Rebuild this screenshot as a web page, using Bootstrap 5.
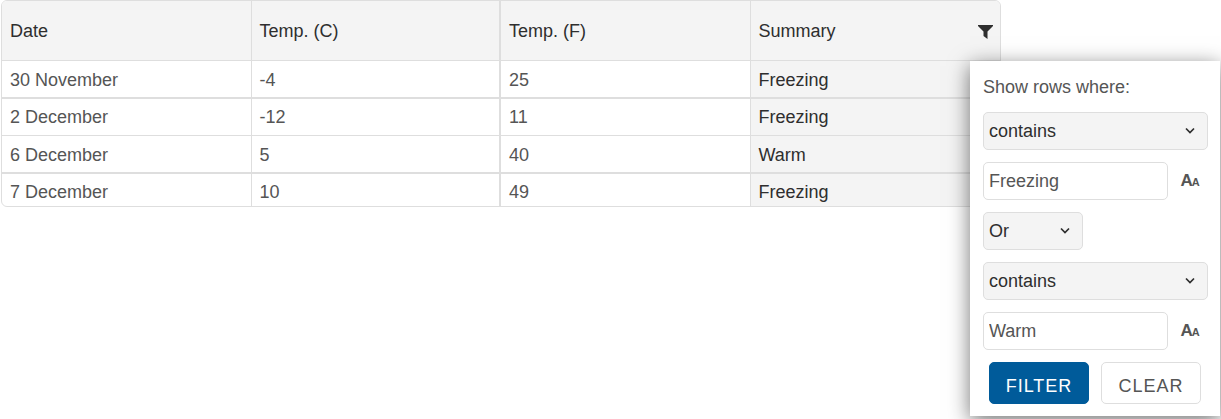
<!DOCTYPE html>
<html lang="en">
<head>
<meta charset="utf-8">
<meta name="viewport" content="width=device-width, initial-scale=1">
<title>Weather table</title>
<link href="https://cdn.jsdelivr.net/npm/bootstrap@5.3.0/dist/css/bootstrap.min.css" rel="stylesheet">
<style>
  body { font-family: "Liberation Sans", Arial, sans-serif; font-size: 18px; line-height: 24px; color: #555; background: #fff; }
  .grid-area { margin: 0 220px 0 1px; }
  .grid-frame { border: 1px solid #dedede; border-radius: 6px; }
  .weather { table-layout: fixed; border-collapse: separate; border-spacing: 0; }
  .weather th, .weather td { padding: 7px 8px 5px; border: 0 solid #dedede; border-bottom-width: 1px; border-right-width: 1px; font-weight: 400; text-align: left; }
  .weather th { height: 60px; padding: 0 7px 0 8px; background: #f4f4f4; color: #2e2e2e; vertical-align: middle; }
  .weather tr > :nth-child(2) { border-right-width: 2px; }
  .weather tr > :last-child { border-right-width: 0; background: #f4f4f4; color: #2e2e2e; }
  .weather tbody tr:nth-child(odd) td { border-bottom-width: 2px; }
  .weather tbody tr:nth-child(even) td { padding-top: 6px; padding-bottom: 6px; }
  .weather tbody tr:last-child td { border-bottom-width: 0; padding-bottom: 2px; }
  .filter-icon { width: 15px; height: 16px; fill: #2e2e2e; display: block; }
  .filter-menu { position: absolute; top: 61px; right: -219px; width: 250px; padding: 14px 12px 12px 13px; background: #fff; box-shadow: 0 5px 20px rgba(0,0,0,.55); }
  .menu-fields { display: grid; gap: 12px; margin-top: 13px; }
  .menu-actions { gap: 12px; padding-left: 6px; }
  .filter-menu .form-select, .filter-menu .form-control { height: 38px; padding: 0 5px; font-size: 18px; line-height: 24px; border: 1px solid #dedede; border-radius: 5px; }
  .filter-menu .form-select { color: #2e2e2e; background-color: #f4f4f4; background-position: right 11px center; background-size: 12px 12px;
    background-image: url("data:image/svg+xml,%3Csvg xmlns='http://www.w3.org/2000/svg' viewBox='0 0 12 12'%3E%3Cpath d='M2 3.500l4 4 4-4' fill='none' stroke='%232e2e2e' stroke-width='1.7'/%3E%3C/svg%3E"); }
  .filter-menu .form-control { color: #555; width: 185px; }
  .filter-menu .join-select { width: 100px; }
  .case-btn { width: 40px; padding: 0 0 0 4px; font-weight: 700; font-size: 17px; line-height: 24px; color: #555; }
  .case-btn small { font-size: 11px; margin-left: -1px; }
  .menu-btn { width: 100px; height: 42px; padding: 5px 0 0; font-size: 18px; line-height: 24px; letter-spacing: 1px; border-radius: 5px; }
  .apply-btn, .apply-btn:hover { background: #005b9a; border-color: #005b9a; color: #fff; }
  .clear-btn, .clear-btn:hover { background: #fff; border-color: #dedede; color: #555; }
</style>
</head>
<body>
<main class="grid-area position-relative min-vh-100">
  <div class="grid-frame overflow-hidden">
    <table class="weather w-100">
      <thead>
        <tr>
          <th scope="col">Date</th>
          <th scope="col">Temp. (C)</th>
          <th scope="col">Temp. (F)</th>
          <th scope="col">
            <div class="d-flex align-items-center justify-content-between">
              <span>Summary</span>
              <button type="button" class="btn p-0 border-0" aria-label="Filter by summary" aria-expanded="true">
                <svg class="filter-icon" viewBox="0 0 15 16" aria-hidden="true"><path d="M0 2h15v1L9.500 8.500V16L5.500 13V8.500L0 3z"/></svg>
              </button>
            </div>
          </th>
        </tr>
      </thead>
      <tbody>
        <tr><td>30 November</td><td>-4</td><td>25</td><td>Freezing</td></tr>
        <tr><td>2 December</td><td>-12</td><td>11</td><td>Freezing</td></tr>
        <tr><td>6 December</td><td>5</td><td>40</td><td>Warm</td></tr>
        <tr><td>7 December</td><td>10</td><td>49</td><td>Freezing</td></tr>
      </tbody>
    </table>
  </div>
  <form class="filter-menu" aria-labelledby="menu-title">
    <div id="menu-title">Show rows where:</div>
    <div class="menu-fields">
      <select class="form-select" aria-label="First condition"><option>contains</option></select>
      <div class="d-flex align-items-center">
        <input class="form-control" type="text" value="Freezing" aria-label="First value">
        <button type="button" class="btn border-0 case-btn text-nowrap" aria-label="Match case">A<small>A</small></button>
      </div>
      <select class="form-select join-select" aria-label="Join conditions with"><option>Or</option></select>
      <select class="form-select" aria-label="Second condition"><option>contains</option></select>
      <div class="d-flex align-items-center">
        <input class="form-control" type="text" value="Warm" aria-label="Second value">
        <button type="button" class="btn border-0 case-btn text-nowrap" aria-label="Match case">A<small>A</small></button>
      </div>
      <div class="d-flex menu-actions">
        <button type="submit" class="btn menu-btn apply-btn">FILTER</button>
        <button type="reset" class="btn menu-btn clear-btn">CLEAR</button>
      </div>
    </div>
  </form>
</main>
<script src="https://cdn.jsdelivr.net/npm/bootstrap@5.3.0/dist/js/bootstrap.bundle.min.js"></script>
</body>
</html>
